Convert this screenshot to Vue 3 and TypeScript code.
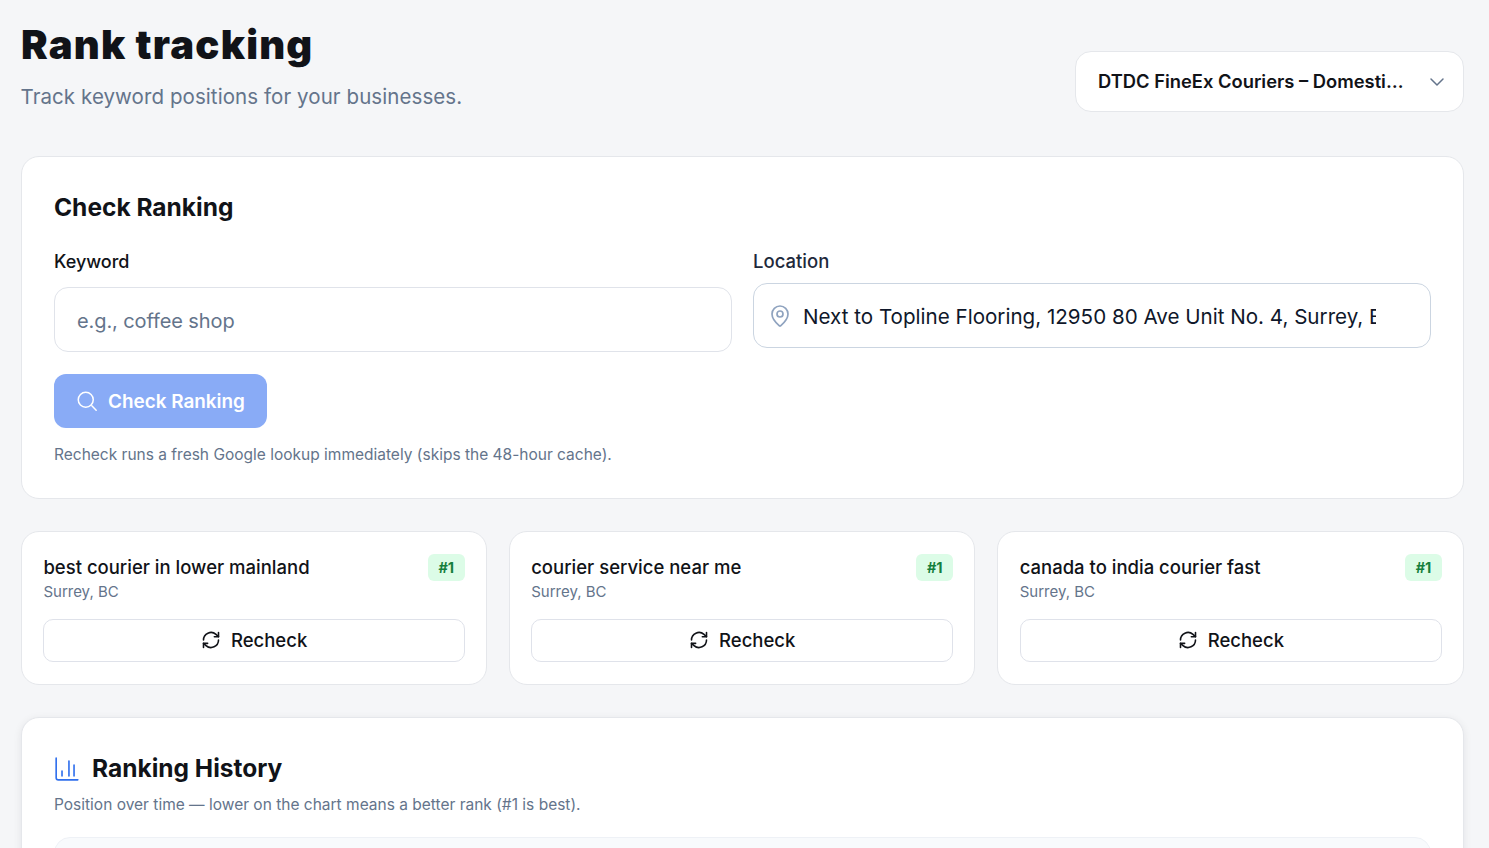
<template>
  <div class="page">
    <header class="page-head">
      <div>
        <h1 class="page-title">Rank tracking</h1>
        <p class="page-sub">Track keyword positions for your businesses.</p>
      </div>
      <button class="biz-select" type="button">
        <span class="biz-name">DTDC FineEx Couriers – Domesti…</span>
        <svg class="chevron" viewBox="0 0 24 24" fill="none" stroke="currentColor" stroke-width="1.5" stroke-linecap="round" stroke-linejoin="round">
          <path d="m6 9 6 6 6-6" />
        </svg>
      </button>
    </header>

    <section class="card check-card">
      <h2 class="check-title">Check Ranking</h2>
      <div class="form-grid">
        <div class="field">
          <label class="label keyword-label">Keyword</label>
          <input class="input keyword-input" type="text" placeholder="e.g., coffee shop" />
        </div>
        <div class="field">
          <label class="label location-label">Location</label>
          <div class="location-wrap">
            <svg class="pin" viewBox="0 0 24 24" fill="none" stroke="currentColor" stroke-width="1.7" stroke-linecap="round" stroke-linejoin="round">
              <path d="M20 10c0 5-5.5 10.2-7.4 11.8a1 1 0 0 1-1.2 0C9.5 20.2 4 15 4 10a8 8 0 0 1 16 0" />
              <circle cx="12" cy="10" r="3" />
            </svg>
            <input class="input location-input" type="text" :value="location" />
          </div>
        </div>
      </div>
      <button class="check-btn" type="button">
        <svg class="search-icon" viewBox="0 0 24 24" fill="none" stroke="currentColor" stroke-width="1.8" stroke-linecap="round" stroke-linejoin="round">
          <circle cx="10.5" cy="10.5" r="9" />
          <path d="m23 23-5.2-5.2" />
        </svg>
        Check Ranking
      </button>
      <p class="hint">Recheck runs a fresh Google lookup immediately (skips the 48-hour cache).</p>
    </section>

    <div class="keyword-grid">
      <article v-for="item in keywords" :key="item.keyword" class="card keyword-card">
        <div class="keyword-top">
          <div>
            <div class="keyword-name">{{ item.keyword }}</div>
            <div class="keyword-loc">{{ item.location }}</div>
          </div>
          <span class="rank-badge">#{{ item.rank }}</span>
        </div>
        <button class="recheck-btn" type="button">
          <svg class="refresh-icon" viewBox="0 0 24 24" fill="none" stroke="currentColor" stroke-width="1.9" stroke-linecap="round" stroke-linejoin="round">
            <path d="M3 12a9 9 0 0 1 15-6.7L21 8" />
            <path d="M21 3v5h-5" />
            <path d="M21 12a9 9 0 0 1-15 6.7L3 16" />
            <path d="M8 16H3v5" />
          </svg>
          Recheck
        </button>
      </article>
    </div>

    <section class="card history-card">
      <div class="history-head">
        <svg class="chart-icon" viewBox="0 0 24 24" fill="none" stroke="currentColor" stroke-width="1.5" stroke-linecap="round" stroke-linejoin="round">
          <path d="M2 2v18a2 2 0 0 0 2 2h18" />
          <path d="M7.4 18.5v-4.7" />
          <path d="M13.8 18.5V4.6" />
          <path d="M18.5 18.5V8.3" />
        </svg>
        <h2 class="history-title">Ranking History</h2>
      </div>
      <p class="history-sub">Position over time — lower on the chart means a better rank (#1 is best).</p>
      <div class="chart-box"></div>
    </section>
  </div>
</template>

<script setup lang="ts">
interface KeywordRow {
  keyword: string;
  location: string;
  rank: number;
}

const location = "Next to Topline Flooring, 12950 80 Ave Unit No. 4, Surrey, BC V3W 0H6, Canada";

const keywords: KeywordRow[] = [
  { keyword: "best courier in lower mainland", location: "Surrey, BC", rank: 1 },
  { keyword: "courier service near me", location: "Surrey, BC", rank: 1 },
  { keyword: "canada to india courier fast", location: "Surrey, BC", rank: 1 },
];
</script>

<style>
html,
body {
  margin: 0;
  background: #f5f6f8;
  overflow: hidden;
}
</style>

<style scoped>
.page {
  box-sizing: border-box;
  height: 848px;
  overflow: hidden;
  padding: 21px 25px 0 21px;
  font-family: Inter, "Liberation Sans", sans-serif;
  color: #111318;
}

.page-head {
  display: flex;
  justify-content: space-between;
  align-items: flex-start;
  height: 135px;
}

.page-title {
  margin: 0;
  font-size: 40px;
  line-height: 48px;
  font-weight: 900;
  letter-spacing: 1.2px;
}

.page-sub {
  margin: 13px 0 0 -0.5px;
  font-size: 20.5px;
  line-height: 30px;
  letter-spacing: 0.08px;
  color: #64748b;
}

.biz-select {
  box-sizing: border-box;
  display: flex;
  align-items: center;
  justify-content: space-between;
  width: 389px;
  height: 61px;
  margin-top: 30px;
  padding: 0 14px 2px 22px;
  background: #fff;
  border: 1px solid #e5e7eb;
  border-radius: 16px;
  font: inherit;
  color: inherit;
}

.biz-name {
  font-size: 18.35px;
  font-weight: 600;
}

.chevron {
  width: 24px;
  height: 24px;
  margin-bottom: -2px;
  color: #64748b;
}

.card {
  box-sizing: border-box;
  background: #fff;
  border: 1px solid #e5e7eb;
  border-radius: 18px;
}

.check-card {
  height: 343px;
  padding: 35px 32px 0;
}

.check-title {
  margin: 0;
  font-size: 24.5px;
  line-height: 31px;
  font-weight: 700;
}

.form-grid {
  display: grid;
  grid-template-columns: 1fr 1fr;
  gap: 21px;
  margin-top: 26px;
}

.label {
  display: block;
  font-size: 18px;
  line-height: 24px;
  font-weight: 500;
}

.keyword-label {
  line-height: 26px;
}

.location-label {
  font-size: 18.5px;
  color: #1e293b;
}

.input {
  box-sizing: border-box;
  display: block;
  width: 100%;
  height: 65px;
  background: #fff;
  border-radius: 14px;
  outline: none;
  font-family: inherit;
}

.keyword-input {
  margin-top: 12px;
  padding: 3px 22px 0;
  border: 1px solid #e0e3ea;
  font-size: 20px;
  letter-spacing: -0.1px;
}

.keyword-input::placeholder {
  color: #64748b;
  opacity: 1;
}

.location-wrap {
  position: relative;
  margin-top: 10px;
}

.pin {
  position: absolute;
  left: 15px;
  top: 21px;
  width: 24px;
  height: 24px;
  color: #8fa3bf;
}

.location-input {
  padding: 2px 54px 0 49px;
  border: 1px solid #cbd5e1;
  font-size: 20.6px;
  color: #0f172a;
}

.check-btn {
  display: flex;
  align-items: center;
  gap: 11px;
  height: 54px;
  margin-top: 22px;
  padding: 0 22px 0 23px;
  background: #89abf6;
  border: none;
  border-radius: 12px;
  color: #fff;
  font-family: inherit;
  font-size: 18.9px;
  font-weight: 600;
}

.search-icon {
  width: 20px;
  height: 20px;
}

.hint {
  margin: 17px 0 0;
  font-size: 15.5px;
  line-height: 20px;
  color: #64748b;
}

.keyword-grid {
  display: grid;
  grid-template-columns: 465.8fr 466.5fr 466.7fr;
  gap: 22px;
  margin-top: 32px;
}

.keyword-card {
  height: 154px;
  padding: 22px 21px 0 21.4px;
}

.keyword-top {
  display: flex;
  justify-content: space-between;
  align-items: flex-start;
  height: 65px;
}

.keyword-name {
  font-size: 18.5px;
  line-height: 27px;
  font-weight: 500;
}

.keyword-loc {
  font-size: 15px;
  line-height: 21px;
  color: #64748b;
}

.rank-badge {
  box-sizing: border-box;
  display: flex;
  align-items: center;
  justify-content: center;
  width: 37px;
  height: 27px;
  background: #dcfce7;
  border-radius: 6px;
  color: #15803d;
  font-size: 14.5px;
  font-weight: 700;
}

.recheck-btn {
  display: flex;
  align-items: center;
  justify-content: center;
  gap: 10px;
  box-sizing: border-box;
  width: 100%;
  height: 43px;
  padding-bottom: 2px;
  background: #fff;
  border: 1px solid #dfe2ea;
  border-radius: 10px;
  color: #111318;
  font-family: inherit;
  font-size: 18.5px;
  font-weight: 500;
}

.refresh-icon {
  width: 20px;
  height: 20px;
}

.history-card {
  height: 240px;
  margin-top: 32px;
  padding: 35px 32px 0;
  box-shadow: 0 2px 8px rgba(15, 23, 42, 0.08);
}

.history-head {
  display: flex;
  align-items: center;
  gap: 12px;
}

.chart-icon {
  width: 26px;
  height: 26px;
  color: #2f6fed;
}

.history-title {
  margin: 0;
  font-size: 24.5px;
  line-height: 31px;
  font-weight: 700;
}

.history-sub {
  margin: 11px 0 0;
  font-size: 15.5px;
  line-height: 20px;
  color: #64748b;
}

.chart-box {
  height: 200px;
  margin-top: 22px;
  background: #f8fafc;
  border: 1px solid #eef1f6;
  border-radius: 16px;
}
</style>
